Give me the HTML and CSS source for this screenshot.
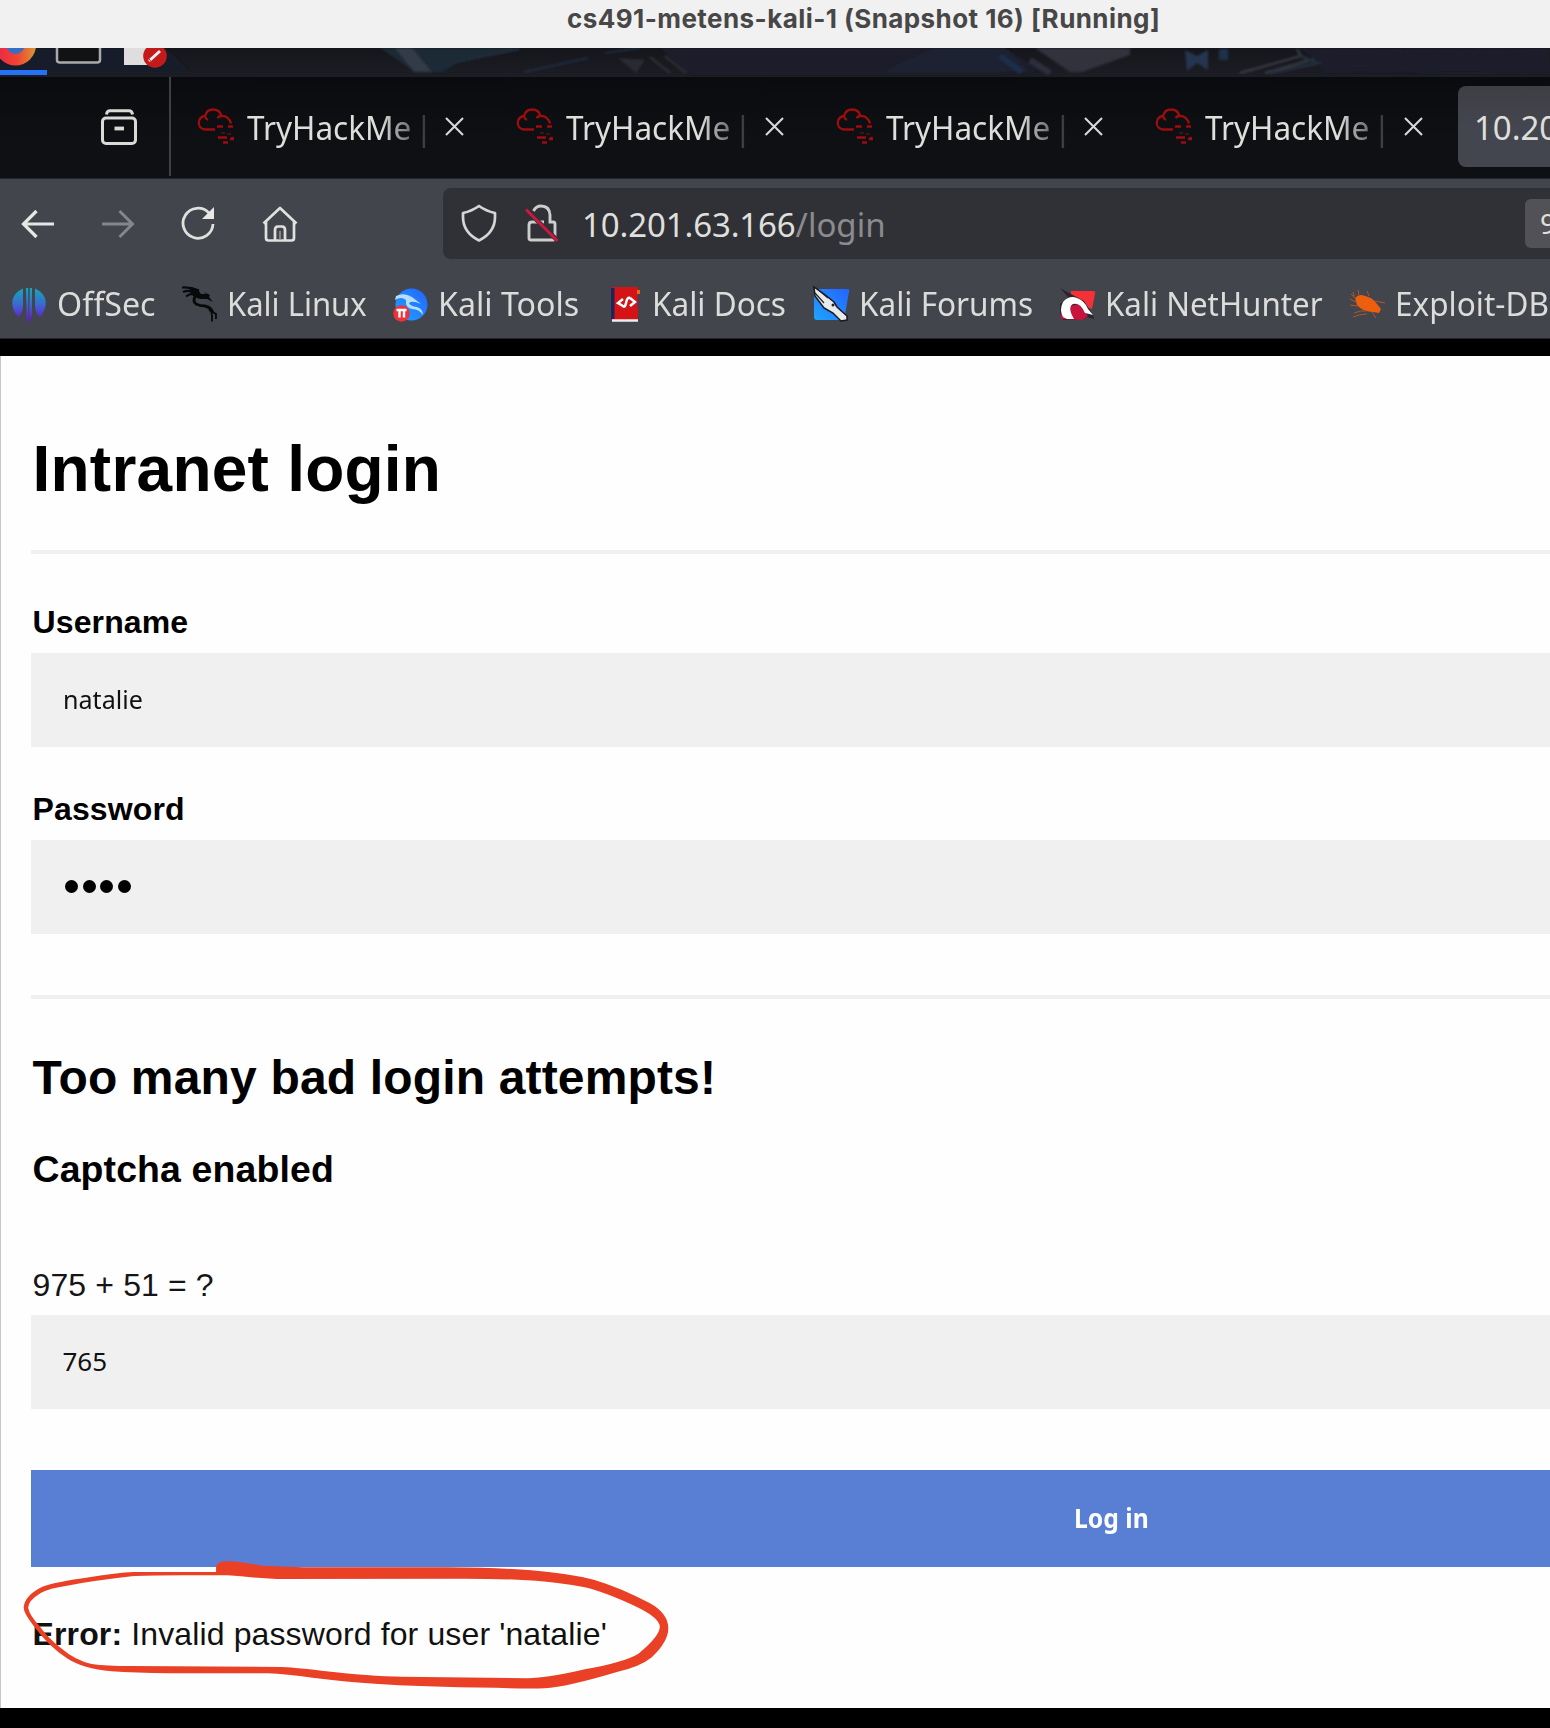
FILE: index.html
```html
<!DOCTYPE html>
<html lang="en">
<head>
<meta charset="utf-8">
<title>Intranet login</title>
<link rel="stylesheet" href="styles.css">
</head>
<body>
<svg width="0" height="0" class="defs" aria-hidden="true">
  <defs>
    <linearGradient id="off" x1="0" y1="0" x2="0" y2="36" gradientUnits="userSpaceOnUse"><stop offset="0" stop-color="#0fb0b8"/><stop offset=".5" stop-color="#3a6bd0"/><stop offset="1" stop-color="#6a0fd0"/></linearGradient>
    <linearGradient id="blue" x1="1" y1="0" x2="0" y2="1"><stop offset="0" stop-color="#2463ff"/><stop offset="1" stop-color="#1fa4ff"/></linearGradient>
    <linearGradient id="fox" x1="0" y1="0" x2="1" y2="0"><stop offset="0" stop-color="#e8264a"/><stop offset=".55" stop-color="#f04530"/><stop offset="1" stop-color="#d59a35"/></linearGradient>
    <symbol id="cloud" viewBox="0 0 37 38">
      <g fill="none" stroke="#9d0d10" stroke-width="2.3">
        <path d="M18 21.500H8C4 21 1.500 18 1.800 14.500C2 11 4.500 8.500 8 8C9 4 12 1.500 16 1.500C20 1.500 23.500 4 24.500 8C29 7.500 33 11 34 15.500M8 8Q8.500 11 11 12M24.500 8Q22 8 20.500 10"/>
        <path d="M20 18.500h6M31 18.500h5M21 29.500h9M33 31h3l-1-2M26 34.500h5" stroke-width="2.700"/>
      </g>
      <path d="M24 25h4M30 26h4" stroke="#3a1416" stroke-width="2"/>
    </symbol>
    <symbol id="close" viewBox="0 0 19 19"><path d="M1 1L18 18M18 1L1 18" stroke="#d8d8d6" stroke-width="2.100" fill="none"/></symbol>
  </defs>
</svg>

<header class="titlebar"><span class="window-title">cs491-metens-kali-1 (Snapshot 16) [Running]</span></header>

<div class="panel">
  <svg width="1550" height="29" viewBox="0 0 1550 29">
    <defs><linearGradient id="pg" x1="0" y1="0" x2="0" y2="1"><stop offset="0" stop-color="#15161b"/><stop offset="1" stop-color="#1d1e25"/></linearGradient>
    <filter id="soft"><feGaussianBlur stdDeviation="1"/></filter></defs>
    <rect width="1550" height="29" fill="url(#pg)"/>
    <g filter="url(#soft)">
      <path d="M0 0H165L190 24H0Z" fill="#181d2c"/>
      <path d="M380 0H520L455 16L442 24H415Z" fill="#1e2936"/><path d="M395 0H412L432 24H414Z" fill="#303a46"/>
      <path d="M432 21L460 13L520 1" stroke="#202d3e" stroke-width="2" fill="none"/>
      <path d="M660 0H1005L1040 22L1000 26H690Z" fill="#1a1e2b"/>
      <path d="M524 24L588 10M605 5L640 0" stroke="#1e2c42" stroke-width="2"/>
      <path d="M618 10L645 12L636 25Z" fill="#292c31"/>
      <path d="M650 9L670 25M665 8L686 25" stroke="#2b2d33" stroke-width="2.500"/>
      <path d="M900 15L935 0H1005L1030 24H885Z" fill="#1c2130"/>
      <path d="M1000 8L1022 24" stroke="#1f2f48" stroke-width="6"/>
      <path d="M1035 0H1130V7L1082 24H1070Z" fill="#30333e"/>
      <path d="M1030 12L1050 25" stroke="#2e2e3a" stroke-width="6"/>
      <path d="M1185 2L1197 8L1208 2V22L1197 15L1187 23Z" fill="#25364f"/><path d="M1219 1h9v11h-9z" fill="#1f304a"/>
      <path d="M1240 25L1301 8L1297 1M1265 25L1314 11" stroke="#3c3e46" stroke-width="2" fill="none"/>
      <path d="M1300 1L1320 14L1322 24L1550 25V0Z" fill="#1a1e2c"/>
      <path d="M1300 8L1318 15L1270 25" stroke="#242e3e" stroke-width="3" fill="none"/>
    </g>
    <circle cx="15.500" cy="-3" r="20.500" fill="url(#fox)"/><circle cx="15.500" cy="-3" r="9" fill="#356fc5"/>
    <path d="M0 24.500H47" stroke="#2572f4" stroke-width="5"/>
    <path d="M57 -8V12Q57 14.500 60 14.500H97Q100 14.500 100 12V-8" fill="#111214" stroke="#aaa" stroke-width="2.500"/>
    <path d="M124 0H150V17H124Z" fill="#dedede"/><circle cx="155" cy="8" r="11.800" fill="#c31a1b"/>
    <path d="M149 13L160 3" stroke="#eee" stroke-width="3"/><path d="M151.500 14L149 11" stroke="#c31a1b" stroke-width="1"/>
  </svg>
</div>

<nav class="tabs">
  <div class="tab-overview"><svg width="36" height="36" viewBox="0 0 36 36" fill="none" stroke="#d9d9d6" stroke-width="3"><rect x="1.500" y="9" width="33" height="25.500" rx="3.500"/><path d="M5.500 5.500Q6 1.800 9 1.800H28Q31 1.800 31.500 5.500"/><path d="M13.500 19.500H23" stroke-width="3.800"/></svg></div>
  <div class="tab"><svg class="cloud"><use href="#cloud"/></svg><span class="tab-name"><span class="narrow">TryHackMe<span class="bar">|</span></span></span><svg class="close"><use href="#close"/></svg></div>
  <div class="tab"><svg class="cloud"><use href="#cloud"/></svg><span class="tab-name"><span class="narrow">TryHackMe<span class="bar">|</span></span></span><svg class="close"><use href="#close"/></svg></div>
  <div class="tab"><svg class="cloud"><use href="#cloud"/></svg><span class="tab-name"><span class="narrow">TryHackMe<span class="bar">|</span></span></span><svg class="close"><use href="#close"/></svg></div>
  <div class="tab"><svg class="cloud"><use href="#cloud"/></svg><span class="tab-name"><span class="narrow">TryHackMe<span class="bar">|</span></span></span><svg class="close"><use href="#close"/></svg></div>
  <div class="tab-active">10.20</div>
</nav>

<div class="toolbar">
  <div class="nav-buttons">
    <svg width="34" height="36" viewBox="0 0 34 36" fill="none" stroke="#e6e6e3" stroke-width="3.200"><path d="M33 18H2M15.500 5L2.500 18L15.500 31"/></svg>
    <svg width="34" height="36" viewBox="0 0 34 36" fill="none" stroke="#85868a" stroke-width="3"><path d="M1 18H32M18.500 5L31.500 18L18.500 31"/></svg>
    <svg width="34" height="36" viewBox="0 0 34 36" fill="none" stroke="#e0e0dd" stroke-width="2.800"><path d="M28 7A15 15 0 1 0 32 18"/><path d="M33 1V13H21Z" fill="#e8e8e5" stroke="none"/></svg>
    <svg width="36" height="36" viewBox="0 0 36 36" fill="none" stroke="#e0e0dd" stroke-width="2.700" stroke-linejoin="round"><path d="M1.500 17.500L18 2L34.500 17.500M4 15.500V32Q4 34.500 6.500 34.500H29.500Q32 34.500 32 32V15.500M13 34V24Q13 20.500 16 20.500H20Q23 20.500 23 24V34"/><path d="M18 25V34" stroke-width="1.500" stroke="#9a9b9e"/></svg>
  </div>
  <div class="urlbar">
    <svg class="shield" width="36" height="38" viewBox="0 0 36 38" fill="none" stroke="#d5d5d3" stroke-width="2.700" stroke-linejoin="round"><path d="M18 2Q25 7 34 9V13C34 25 27 32 18 36.500C9 32 2 25 2 13V9Q11 7 18 2Z"/></svg>
    <svg class="lock" width="34" height="38" viewBox="0 0 34 38" fill="none" stroke="#cdcdcb" stroke-width="2.900"><path d="M8.500 7Q11 2 16 2Q24.500 2 25 11V18H28Q30 18 30 20V34Q30 36 28 36H6Q4 36 4 34V21Q4 18 7 18H19"/><path d="M1 5.500L33 37" stroke="#303136" stroke-width="4.500"/><path d="M1 5.500L32.500 37" stroke="#cf1740" stroke-width="2.800"/></svg>
    <span class="url"><span class="host">10.201.63.166</span><span class="path">/login</span></span>
    <span class="zoom">90%</span>
  </div>
</div>

<div class="bookmarks">
  <div class="bookmark"><svg viewBox="0 0 36 36"><path d="M12 2.500V21Q11 28 7.500 31Q1 25 1.200 16Q2 7 12 2.500ZM24 2.500V21Q25 28 28.500 31Q35 25 34.800 16Q34 7 24 2.500ZM15 2H17.200V28L18 35.500L15.700 34ZM18.800 2H21V28L19.500 35L18 35.500Z" fill="url(#off)"/></svg><span class="narrow offsec">OffSec</span></div>
  <div class="bookmark"><svg viewBox="0 0 36 36" fill="none" stroke="#08090a" stroke-linejoin="round"><path d="M1 1.500Q10 1 18 4.500M2 6Q9 3 16 8M5 10.500Q9 7 14 8" stroke-width="2.200"/><path d="M8 2L17 4L20 8L25 8L23 6L29 9L28 11L32 16L26 13L20 13Q14 12 11 9Z" fill="#08090a" stroke="none"/><path d="M15 9Q11 15 15 18Q19 20 24 20Q30 21 32 27" stroke-width="2.800"/><path d="M26 21Q32 24 31 35.500M28 24L35 28L35 33" stroke-width="1.800"/></svg><span class="narrow linux">Kali Linux</span></div>
  <div class="bookmark"><svg viewBox="0 0 36 36"><circle cx="19.500" cy="18.500" r="16" fill="url(#blue)"/><path d="M4 10Q12 6 20 11L29 18Q20 14 17 17Q18 20 25 21Q31 23 31 29Q27 23 20 23Q13 22 14 14Q9 10 3 14Z" fill="#b6dcff"/><circle cx="9.500" cy="27.500" r="8.300" fill="#ef3239"/><path d="M4.500 24H14.500M7.500 24V31.500M12 24V31.500" stroke="#fff" stroke-width="2.400"/></svg><span class="narrow tools">Kali Tools</span></div>
  <div class="bookmark"><svg viewBox="0 0 36 36"><path d="M5 1H32V34L31 35H6L5 33Z" fill="#d41317"/><path d="M5 2H8.500V33H5Z" fill="#1d2458"/><path d="M6 34.500H32" stroke="#eee" stroke-width="2.500"/><path d="M31 4H34V8H31Z" fill="#e46b18"/><path d="M32 9V22" stroke="#6a3150" stroke-width="2"/><path d="M17 13L12 17L17 20M24 12L29 16L24 20M17 20Q19 22 20 17Q21 11 24 12" fill="none" stroke="#fff" stroke-width="2.500"/></svg><span class="narrow">Kali Docs</span></div>
  <div class="bookmark"><svg viewBox="0 0 36 36"><path d="M6 3H34.500Q37 3 36 6L31 34H4Q1 34 1 31V6Q1 3 6 3Z" fill="url(#blue)"/><path d="M1 1L11 8L21 16L24 21L34 30L34 34L28 35L20 27L11 22L2 10Z" fill="#e9eaec" stroke="#17181c" stroke-width="1.500"/><path d="M3 2L15 12M2 7L11 17" stroke="#222" stroke-width="1.200"/><circle cx="20" cy="19" r="1.500" fill="#222"/></svg><span class="narrow">Kali Forums</span></div>
  <div class="bookmark"><svg viewBox="0 0 36 36"><path d="M12 5H34Q37 5 36 8L33 23L12 15Z" fill="#f53036"/><path d="M1 2L10 7L25 15L34 29L35 33L28 31L22 34H4L1 29V18L9 11Z" fill="#29242e"/><path d="M3 33L1 29L8 21L19 18Q25 24 29 30L23 34Z" fill="#c8143c"/><path d="M4 31Q0 24 4 16Q10 9 18 12Q26 15 29 23L34 29L26 27Q21 16 14 18Q8 21 15 33H8Z" fill="#fff"/></svg><span class="narrow hunter">Kali NetHunter</span></div>
  <div class="bookmark"><svg viewBox="0 0 36 36"><path d="M6 12Q10 7 16 10Q23 11 28 18L32 23L30 27L24 26Q14 26 8 19Z" fill="#ed5f0e"/><path d="M5 10L4 6M10 9L9 4M1 13L7 16M1 19L9 20M5 27Q12 24 17 25M4 31Q11 28 18 28M20 10L18 5M26 15L36 17M23 26L27 32M2 8L7 13" stroke="#a9582a" stroke-width="1" fill="none"/></svg><span class="narrow">Exploit-DB</span></div>
</div>

<main class="page">
  <h1>Intranet login</h1>
  <div class="rule"></div>
  <div class="label username">Username</div>
  <div class="field"><span class="value name">natalie</span></div>
  <div class="label password">Password</div>
  <div class="field dots"><i></i><i></i><i></i><i></i></div>
  <div class="rule second"></div>
  <h2>Too many bad login attempts!</h2>
  <h3>Captcha enabled</h3>
  <div class="question">975 + 51 = ?</div>
  <div class="field"><span class="value">765</span></div>
  <div class="login"><span>Log in</span></div>
  <p class="error"><b>Error:</b> Invalid password for user 'natalie'</p>
  <svg class="marker" viewBox="0 0 1568 1464" preserveAspectRatio="none"><path fill="#ea4025" fill-rule="evenodd" d="M484 996V980Q487 963 510 964Q540 965 580 976Q620 981 700 982H1000Q1120 983 1190 991Q1270 1000 1330 1019Q1390 1043 1455 1089Q1497 1120 1497 1165Q1497 1205 1460 1252Q1435 1280 1380 1297Q1270 1341 1220 1345Q1180 1347 1110 1343Q940 1340 840 1331Q780 1326 700 1313Q640 1302 600 1300H380Q300 1299 250 1294Q185 1286 150 1255Q107 1216 75 1157Q53 1120 53 1102Q55 1066 95 1040Q125 1026 200 1012Q260 998 300 996ZM510 1006H410Q320 1006 295 1009Q215 1021 150 1037Q110 1045 92 1058Q63 1082 63 1103Q66 1125 88 1157Q105 1190 137 1225Q168 1261 205 1272Q240 1278 290 1278L630 1281Q650 1281 720 1292Q830 1309 900 1310L1180 1315Q1230 1314 1310 1288Q1400 1266 1430 1241Q1478 1188 1478 1160Q1477 1134 1430 1103Q1355 1056 1310 1042Q1245 1024 1160 1019Q1100 1016 1040 1016L620 1017Q580 1015 540 1009Z"/></svg>
</main>
<footer class="bottom"></footer>
</body>
</html>
```
FILE: styles.css
```css
* { box-sizing: border-box; }
body { margin: 0; width: 1550px; height: 1728px; overflow: hidden; background: #000; font-family: "Noto Sans", sans-serif; display: flex; flex-direction: column; }
body > * { flex: none; }
svg { display: block; flex: none; }
.defs { position: absolute; }

.titlebar { height: 48px; background: #f1f1f1; padding-left: 567px; line-height: 37px; }
.window-title { font: 700 26px/37px Inter, sans-serif; letter-spacing: .43px; color: #474747; white-space: nowrap; display: inline-block; }

.panel { height: 29px; overflow: hidden; }

.tabs { height: 102px; background: linear-gradient(#0a0b0e, #0f1014 60%); border-bottom: 1px solid #24252b; display: flex; font-size: 33px; color: #dededb; }
.tab-overview { width: 170.500px; height: 99px; padding: 32px 0 0 101px; border-right: 2px solid #3f4043; }
.narrow { display: inline-block; transform: scaleX(.955); transform-origin: left; white-space: nowrap; }
.tab { width: 319.600px; padding: 0 0 0 26px; display: flex; }
.cloud { width: 37px; height: 38px; margin-top: 30.500px; }
.tab-name { width: 190px; margin-left: 13px; line-height: 102px; overflow: hidden; -webkit-mask-image: linear-gradient(90deg, #000 70%, rgba(0,0,0,.2) 94%); mask-image: linear-gradient(90deg, #000 70%, rgba(0,0,0,.2) 94%); }
.bar { margin-left: 4px; }
.close { width: 19px; height: 19px; margin: 40px 0 0 8.500px; }
.tab-active { flex: 1; height: 81px; margin: 9px 0 0 9px; padding-left: 16px; border-radius: 8px 0 0 8px; background: linear-gradient(#3e3f43, #44464f 50%); line-height: 84px; white-space: nowrap; overflow: hidden; }

.toolbar { height: 89px; background: #43454d; padding: 9px 0 0 21px; display: flex; }
.nav-buttons { display: flex; width: 422px; gap: 46.200px; padding-top: 18px; }
.urlbar { flex: 1; height: 71px; background: #303136; border-radius: 8px 0 0 8px; display: flex; align-items: flex-start; color: #dfdfdc; font-size: 33px; }
.shield { margin: 16px 0 0 18px; }
.lock { margin: 16px 0 0 28px; }
.url { margin-left: 23px; line-height: 73px; white-space: nowrap; }
.host { letter-spacing: -.13px; }
.path { color: #8b8b8d; display: inline-block; }
.zoom { margin: 11px 0 0 auto; width: 25px; height: 49px; padding-left: 15px; border-radius: 6px 0 0 6px; background: #515156; font-size: 28px; line-height: 49px; overflow: hidden; }

.bookmarks { height: 71px; background: #43454d; padding: 18px 0 0 11px; display: grid; grid-template-columns: 170px 211px 214px 207px 246px 290px 201px; font-size: 33px; color: #dcdcda; border-bottom: 1px solid #24252a; }
.bookmark { display: flex; gap: 9.500px; line-height: 35px; }
.bookmark svg { width: 36px; height: 36px; overflow: visible; }
.offsec { transform: scaleX(.975); }
.linux { transform: scaleX(.94); }
.tools { transform: scaleX(.975); }
.hunter { transform: scaleX(.948); }

.page { position: relative; height: 1352px; margin-top: 17px; background: #fefefe; border-left: 1px solid #c8c8c8; padding: 0 0 0 30px; font-family: "Liberation Sans", Arial, sans-serif; font-size: 32px; color: #000; overflow: hidden; }
h1, h2, h3, p { margin: 0; white-space: nowrap; }
h1, h2, h3, .label, .question, .error { padding-left: 1.500px; letter-spacing: .13px; }
h1 { font-size: 64px; line-height: 74px; margin-top: 76px; letter-spacing: .24px; }
.rule { height: 4px; background: #f0f0f0; margin-top: 44px; }
.label { font-weight: 700; line-height: 38px; }
.username { margin-top: 49px; }
.password { margin-top: 43px; }
.field { height: 94px; background: #f0f0f0; margin-top: 12px; padding-left: 31.500px; font-family: "Noto Sans", sans-serif; font-size: 26px; line-height: 93px; color: #111; }
.name { transform: scaleX(.965); }
.dots { display: flex; align-items: center; gap: 4.500px; padding: 0 0 1px 34px; }
.dots i { width: 13px; height: 13px; border-radius: 50%; background: #000; }
.second { margin-top: 61px; }
h2 { font-size: 48px; line-height: 56px; margin-top: 51px; letter-spacing: .16px; }
h3 { font-size: 37.440px; line-height: 44px; margin-top: 41px; }
.question { line-height: 38px; margin: 75px 0 -1px; color: #151515; }
.login { height: 97px; margin-top: 61px; background: #597fd5; color: #fff; font: 700 26px/97px "Noto Sans", sans-serif; padding-left: 1043px; }
.value, .login span { display: inline-block; transform-origin: left; }
.login span { transform: scaleX(.95); }
.error { line-height: 38px; margin-top: 48px; color: #111; }
.marker { position: absolute; left: -1px; top: 884px; width: 700px; height: 488px; pointer-events: none; }
.bottom { height: 20px; background: #000; }
```
